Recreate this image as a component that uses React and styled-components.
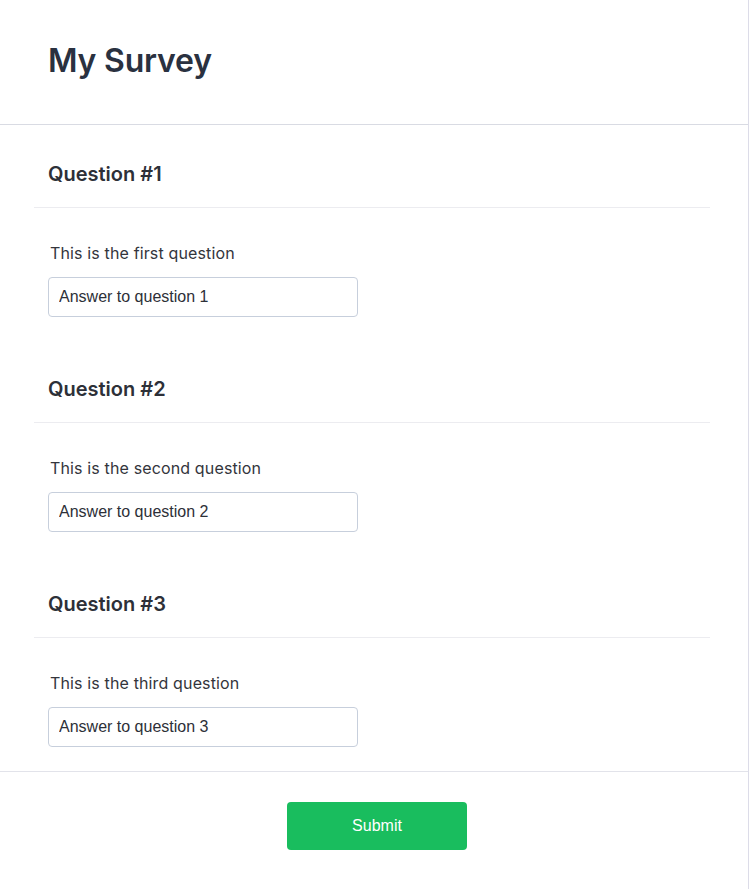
import React from "react";
import styled, { createGlobalStyle } from "styled-components";

const Global = createGlobalStyle`
  html, body { margin: 0; padding: 0; background: #ffffff; }
  body { font-family: Inter, "Noto Sans", sans-serif; color: #2d3748; }
  * { box-sizing: border-box; }
`;

const Card = styled.div`
  width: 749px;
  border-right: 1px solid #dcdce8;
  background: #fff;
`;

const Header = styled.header`
  padding: 41px 48px 43px;
  border-bottom: 1px solid #d9dbe3;
`;

const Title = styled.h1`
  margin: 0;
  font-family: Inter, sans-serif;
  font-size: 32px;
  line-height: 40px;
  font-weight: 600;
  letter-spacing: -0.2px;
  color: #2a3140;
`;

const Body = styled.main`
  padding: 0 38px 24px 34px;
  border-bottom: 1px solid #e2e3ea;
`;

const Question = styled.section`
  padding-top: ${(p) => (p.$first ? "35px" : "58px")};
`;

const QuestionTitle = styled.h2`
  margin: 0;
  padding: 0 14px 19px;
  font-family: Inter, sans-serif;
  font-size: 20px;
  line-height: 28px;
  font-weight: 600;
  color: #2d3038;
  border-bottom: 1px solid #ececf0;
`;

const Field = styled.div`
  display: flex;
  flex-direction: column;
  align-items: flex-start;
  gap: 12px;
  padding: 33px 14px 0;
`;

const Label = styled.label`
  padding-left: 2px;
  font-family: Inter, sans-serif;
  font-size: 16px;
  line-height: 24px;
  font-weight: 400;
  letter-spacing: 0.14px;
  color: #33353c;
`;

const Input = styled.input`
  width: 310px;
  height: 40px;
  padding: 0 10px;
  border: 1px solid #c7cfdc;
  border-radius: 4px;
  font-family: "Liberation Sans", Arial, sans-serif;
  font-size: 16px;
  color: #2d3038;
  background: #fff;
  outline: none;
`;

const Footer = styled.footer`
  display: flex;
  justify-content: center;
  padding: 30px 0 39px 6px;
`;

const SubmitButton = styled.button`
  width: 180px;
  height: 48px;
  border: none;
  border-radius: 4px;
  background: #19bd5e;
  color: #ffffff;
  font-family: "Liberation Sans", Arial, sans-serif;
  font-size: 16px;
  cursor: pointer;
`;

const questions = [
  { n: 1, text: "This is the first question" },
  { n: 2, text: "This is the second question" },
  { n: 3, text: "This is the third question" },
];

export default function App() {
  return (
    <>
      <Global />
      <Card>
        <Header>
          <Title>My Survey</Title>
        </Header>
        <Body>
          {questions.map((q, i) => (
            <Question key={q.n} $first={i === 0}>
              <QuestionTitle>Question #{q.n}</QuestionTitle>
              <Field>
                <Label htmlFor={`q${q.n}`}>{q.text}</Label>
                <Input id={`q${q.n}`} defaultValue={`Answer to question ${q.n}`} />
              </Field>
            </Question>
          ))}
        </Body>
        <Footer>
          <SubmitButton type="button">Submit</SubmitButton>
        </Footer>
      </Card>
    </>
  );
}
